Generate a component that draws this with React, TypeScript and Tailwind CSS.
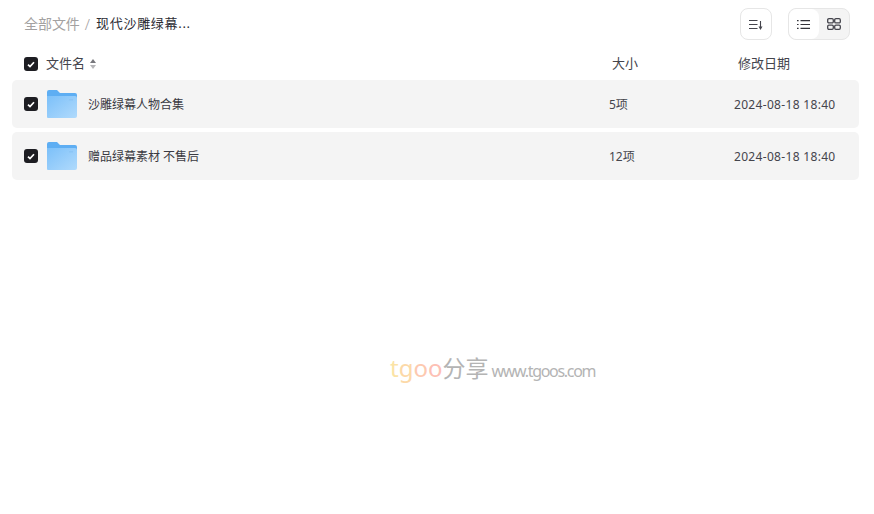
import { useState } from 'react';

const cjk = "font-['Noto_Sans','Noto_Sans_CJK_SC',sans-serif]";

const files = [
  { name: '沙雕绿幕人物合集', size: '5项', date: '2024-08-18 18:40' },
  { name: '赠品绿幕素材 不售后', size: '12项', date: '2024-08-18 18:40' },
];

function Check() {
  return (
    <span className="flex h-[14px] w-[14px] shrink-0 items-center justify-center rounded-[3px] bg-[#1d1d22]">
      <svg width="8" height="7" viewBox="0 0 8 7" fill="none">
        <path d="M1 3.6 L3 5.6 L7 1.2" stroke="#fff" strokeWidth="1.7" />
      </svg>
    </span>
  );
}

function Folder() {
  return (
    <svg width="30" height="28" viewBox="0 0 30 28" className="block shrink-0">
      <defs>
        <linearGradient id="folderBody" x1="0" y1="0" x2="1" y2="1">
          <stop offset="0" stopColor="#7cc0f9" />
          <stop offset="1" stopColor="#b0dafc" />
        </linearGradient>
      </defs>
      <path d="M0 2 a2 2 0 0 1 2-2 h8 l3 3 h15 a2 2 0 0 1 2 2 v4 H0z" fill="#5eaef3" />
      <path d="M0 6 h28 a2 2 0 0 1 2 2 v18 a2 2 0 0 1-2 2 H1 a1 1 0 0 1-1-1z" fill="url(#folderBody)" />
      <rect x="22" y="9" width="4" height="1.5" fill="#8cc5f6" />
    </svg>
  );
}

export default function App() {
  const [view] = useState('list');

  return (
    <div className={`relative h-[514px] w-[874px] overflow-hidden bg-white ${cjk}`}>
      <div className="flex h-[48px] items-center justify-between pl-6 pr-6">
        <div className="flex items-center text-[13px]">
          <span className="mb-[2px] text-[14px] tracking-[-0.05px] text-[#a3a1a1]">全部文件</span>
          <span className="ml-[5px] mr-[6px] text-[15px] font-light text-[#a3a1a1]">/</span>
          <span className="mb-[1px] tracking-[0.7px] text-[#2c2c33]">现代沙雕绿幕...</span>
        </div>
        <div className="flex items-center gap-4">
          <button className="flex h-8 w-8 items-center justify-center rounded-lg border border-[#e6e6e6] bg-white">
            <svg width="14" height="11" viewBox="0 0 14 11" fill="none" stroke="#44444c" strokeWidth="1.1">
              <path d="M0 1.5h8.5M0 5.5h8.5M0 9.5h8.5M11.5 2v6" />
              <path d="M9.5 7.5 11.5 11l2-3.5z" fill="#44444c" stroke="none" />
            </svg>
          </button>
          <div className="flex h-8 w-[62px] rounded-lg border border-[#e6e6e6] bg-[#f4f4f4]">
            <button className={`flex w-[30px] items-center justify-center rounded-lg ${view === 'list' ? 'bg-white' : ''}`}>
              <svg width="13" height="9" viewBox="0 0 13 9" fill="none" stroke="#33333a" strokeWidth="1.1" className="-ml-[1px]">
                <path d="M0 .6h1.6M3.5 .6H13M0 4.5h1.6M3.5 4.5H13M0 8.4h1.6M3.5 8.4H13" />
              </svg>
            </button>
            <button className="flex flex-1 items-center justify-center">
              <svg width="14" height="12" viewBox="0 0 14 12" fill="none" stroke="#44444c" strokeWidth="1.3">
                <rect x="0.7" y="0.7" width="5.6" height="4.2" rx="1.2" />
                <rect x="7.7" y="0.7" width="5.6" height="4.2" rx="1.2" />
                <rect x="0.7" y="7.1" width="5.6" height="4.2" rx="1.2" />
                <rect x="7.7" y="7.1" width="5.6" height="4.2" rx="1.2" />
              </svg>
            </button>
          </div>
        </div>
      </div>

      <div className="flex h-[32px] items-center pl-6 text-[13px] text-[#44444c]">
        <Check />
        <span className="ml-2">文件名</span>
        <svg width="6" height="10" viewBox="0 0 6 10" className="ml-[5px]">
          <path d="M3 0 6 4H0z" fill="#77777c" />
          <path d="M3 10 6 6H0z" fill="#b5b5b8" />
        </svg>
        <span className="ml-[516px] w-[126px]">大小</span>
        <span>修改日期</span>
      </div>

      <div className="flex flex-col gap-1 pl-3 pr-[15px]">
        {files.map((file) => (
          <div key={file.name} className="flex h-12 items-center rounded-[5px] bg-[#f4f4f4] pl-3 text-[12px] text-[#44444c]">
            <Check />
            <span className="ml-[9px]"><Folder /></span>
            <span className="ml-[11px] mt-[2px] w-[521px] text-[#3a3a42]">{file.name}</span>
            <span className="mt-[2px] w-[125px]">{file.size}</span>
            <span className="mt-[2px] tracking-[0.32px]">{file.date}</span>
          </div>
        ))}
      </div>

      <div className="absolute left-[390px] top-[353px] flex items-baseline whitespace-nowrap">
        <span className="text-[24px] leading-[30px]">
          <span className="text-[#fbe3a6]">t</span>
          <span className="text-[#fcd9a8]">g</span>
          <span className="text-[#fdc9b0]">o</span>
          <span className="text-[#fdc0b4]">o</span>
        </span>
        <span className="text-[23px] leading-[30px] text-[#b4b4b4]">分享</span>
        <span className="ml-[3px] text-[16px] tracking-[-1.3px] text-[#b4b4b4]">www.tgoos.com</span>
      </div>
    </div>
  );
}
